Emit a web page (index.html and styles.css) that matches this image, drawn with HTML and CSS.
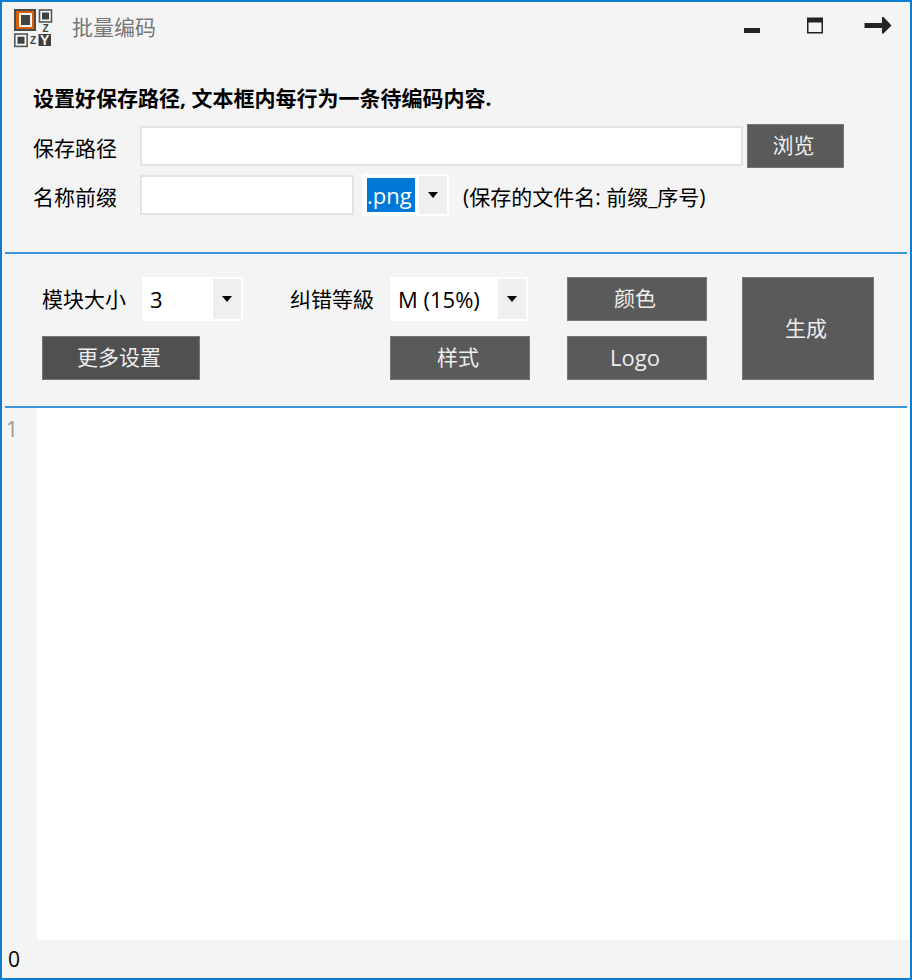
FILE: index.html
```html
<!DOCTYPE html>
<html lang="zh-CN">
<head>
  <meta charset="UTF-8">
  <meta name="viewport" content="width=device-width, initial-scale=1.0">
  <title>批量编码</title>
  <link rel="stylesheet" href="styles.css">
</head>
<body>
  <div class="window">
    <header class="titlebar">
      <svg class="logo" width="40" height="40" viewBox="0 0 40 40" aria-hidden="true">
        <rect x="2" y="2" width="20" height="20" fill="#d95f02" stroke="#4a4a4a" stroke-width="2"/>
        <rect x="7" y="6" width="11" height="12" fill="#444" stroke="#f4f4f4" stroke-width="2"/>
        <rect x="26.5" y="2" width="12" height="12" fill="none" stroke="#555" stroke-width="1.6"/>
        <rect x="29" y="4.5" width="7" height="7" fill="#3f3f3f"/>
        <rect x="1.8" y="26" width="12.4" height="12.4" fill="none" stroke="#555" stroke-width="1.6"/>
        <rect x="4.5" y="28.7" width="7" height="7" fill="#3f3f3f"/>
        <text class="logo-z" x="32.5" y="23.500">Z</text>
        <text class="logo-z" x="20" y="35.500">Z</text>
        <rect x="25.5" y="26" width="12.5" height="12" fill="#3f3f3f"/>
        <text class="logo-y" x="31.7" y="37">Y</text>
      </svg>
      <h1 class="title">批量编码</h1>
      <div class="window-buttons">
        <button type="button" class="window-button" aria-label="最小化">
          <svg width="28" height="28" viewBox="0 0 28 28"><path d="M6 16h16v5H6z" fill="#222"/></svg>
        </button>
        <button type="button" class="window-button" aria-label="最大化">
          <svg width="28" height="28" viewBox="0 0 28 28"><path d="M6 5.500h16v16H6zM7.500 10.500v9.500h13V10.500z" fill="#222" fill-rule="evenodd"/></svg>
        </button>
        <button type="button" class="window-button" aria-label="返回">
          <svg width="28" height="28" viewBox="0 0 28 28"><path d="M0.500 11H18V5h1.500L27.500 13.500 19.500 21.500H18V16H0.500z" fill="#222"/></svg>
        </button>
      </div>
    </header>

    <section class="save">
      <p class="hint">设置好保存路径, 文本框内每行为一条待编码内容.</p>
      <div class="row path-row">
        <label class="row-label" for="path">保存路径</label>
        <input class="field path" type="text" id="path">
        <button type="button" class="button browse">浏览</button>
      </div>
      <div class="row">
        <label class="row-label" for="prefix">名称前缀</label>
        <input class="field prefix" type="text" id="prefix">
        <div class="combo combo-ext">
          <select class="combo-select selected" aria-label="图片格式">
            <option>.png</option>
            <option>.jpg</option>
          </select>
          <span class="combo-arrow"><svg width="10" height="6" viewBox="0 0 10 6"><path d="M0 0h10L5 6z"/></svg></span>
        </div>
        <span class="note">(保存的文件名: 前缀_序号)</span>
      </div>
    </section>

    <section class="options">
      <label for="size">模块大小</label>
      <div class="combo combo-size">
        <select class="combo-select" id="size">
          <option>3</option>
          <option>4</option>
          <option>5</option>
        </select>
        <span class="combo-arrow"><svg width="10" height="6" viewBox="0 0 10 6"><path d="M0 0h10L5 6z"/></svg></span>
      </div>
      <label for="level">纠错等級</label>
      <div class="combo combo-level">
        <select class="combo-select" id="level">
          <option>M (15%)</option>
          <option>L (7%)</option>
          <option>Q (25%)</option>
          <option>H (30%)</option>
        </select>
        <span class="combo-arrow"><svg width="10" height="6" viewBox="0 0 10 6"><path d="M0 0h10L5 6z"/></svg></span>
      </div>
      <button type="button" class="button">颜色</button>
      <button type="button" class="button generate">生成</button>
      <button type="button" class="button more">更多设置</button>
      <button type="button" class="button style">样式</button>
      <button type="button" class="button latin">Logo</button>
    </section>

    <main class="editor">
      <div class="gutter">1</div>
      <textarea class="content" aria-label="待编码内容" spellcheck="false"></textarea>
    </main>

    <footer class="status">0</footer>
  </div>
</body>
</html>
```
FILE: styles.css
```css
* {
  box-sizing: border-box;
}
body {
  margin: 0;
  font-family: "Open Sans", "Noto Sans CJK SC", sans-serif;
  font-size: 21px;
  line-height: 30px;
  color: black;
}
button, input, select, textarea {
  font: inherit;
  color: inherit;
  margin: 0;
  border-radius: 0;
}
.window {
  display: flex;
  flex-direction: column;
  min-height: 100vh;
  border: 2px solid #0c7cd0;
  background: #f4f4f4;
}

/* title bar */
.titlebar {
  display: flex;
  align-items: flex-start;
  height: 81px;
  padding: 6px 18px 0 11px;
}
.logo {
  margin-right: 19px;
}
.logo-z, .logo-y {
  font-family: "Liberation Sans", sans-serif;
  font-weight: bold;
  text-anchor: middle;
}
.logo-z {
  font-size: 10px;
  fill: #444;
}
.logo-y {
  font-size: 14px;
  fill: #f4f4f4;
}
.title {
  margin: 4px 0 0;
  font-size: 21px;
  font-weight: normal;
  color: #777;
}
.window-buttons {
  display: flex;
  gap: 35px;
  margin-left: auto;
  padding-top: 4px;
}
.window-button {
  width: 28px;
  height: 28px;
  padding: 0;
  border: none;
  background: none;
}
.window-button svg {
  display: block;
}

/* save path */
.save {
  margin: 0 3px;
  padding: 0 63px 36px 28px;
  border-bottom: 2px solid #3a97dc;
}
.hint {
  margin: 0 0 11px;
  font-weight: bold;
}
.row {
  display: flex;
  align-items: center;
}
.path-row {
  margin-bottom: 6px;
}
.row-label, .note {
  padding-top: 3px;
}
.row-label {
  width: 107px;
}
.field {
  height: 40px;
  padding: 0 8px;
  border: 2px solid #e3e3e3;
  background: white;
}
.path {
  flex: 1;
  min-width: 0;
}
.prefix {
  width: 214px;
}
.note {
  margin-left: 14px;
}

/* buttons */
.button {
  height: 44px;
  padding: 0 4px 2px 0;
  border: 1px solid #777;
  background: #5a5a5a;
  color: #eee;
}
.browse {
  width: 97px;
  margin-left: 4px;
}
.latin {
  font-size: 22px;
}

/* drop-downs */
.combo {
  display: grid;
  background: white;
}
.combo-select {
  grid-area: 1 / 1;
  appearance: none;
  width: 100%;
  height: 44px;
  padding: 0 30px 0 8px;
  border: none;
  background: none;
  font-size: 22px;
}
.combo-arrow {
  grid-area: 1 / 1;
  justify-self: end;
  display: flex;
  align-items: center;
  justify-content: center;
  width: 28px;
  margin: 2px;
  background: #efefef;
  pointer-events: none;
}
.combo-ext {
  width: 87px;
  margin-left: 8px;
}
.combo-ext .combo-select {
  height: 42px;
  padding: 4px 34px 4px 5px;
}
.combo-select.selected {
  background: #0078d7 content-box;
  color: white;
}
.combo-size {
  width: 101px;
}
.combo-level {
  width: 138px;
}

/* encoding options */
.options {
  display: grid;
  grid-template-columns: 100px 148px 100px 177px 140px 1fr;
  row-gap: 15px;
  align-items: center;
  margin: 0 3px;
  padding: 23px 33px 26px 37px;
  border-bottom: 2px solid #3a97dc;
}
.generate {
  grid-area: 1 / 6 / 3 / 7;
  align-self: stretch;
  height: auto;
  margin-left: 35px;
}
.more {
  grid-column: 1 / 3;
  width: 158px;
  background: #505050;
}
.style {
  grid-column: 4;
  width: 140px;
}

/* text area */
.editor {
  flex: 1;
  display: flex;
}
.gutter {
  width: 35px;
  padding: 6px 0 0 4px;
  color: #999;
}
.content {
  flex: 1;
  padding: 6px 4px;
  border: none;
  outline: none;
  resize: none;
  background: white;
}
.status {
  height: 38px;
  padding: 4px 6px;
}
```
